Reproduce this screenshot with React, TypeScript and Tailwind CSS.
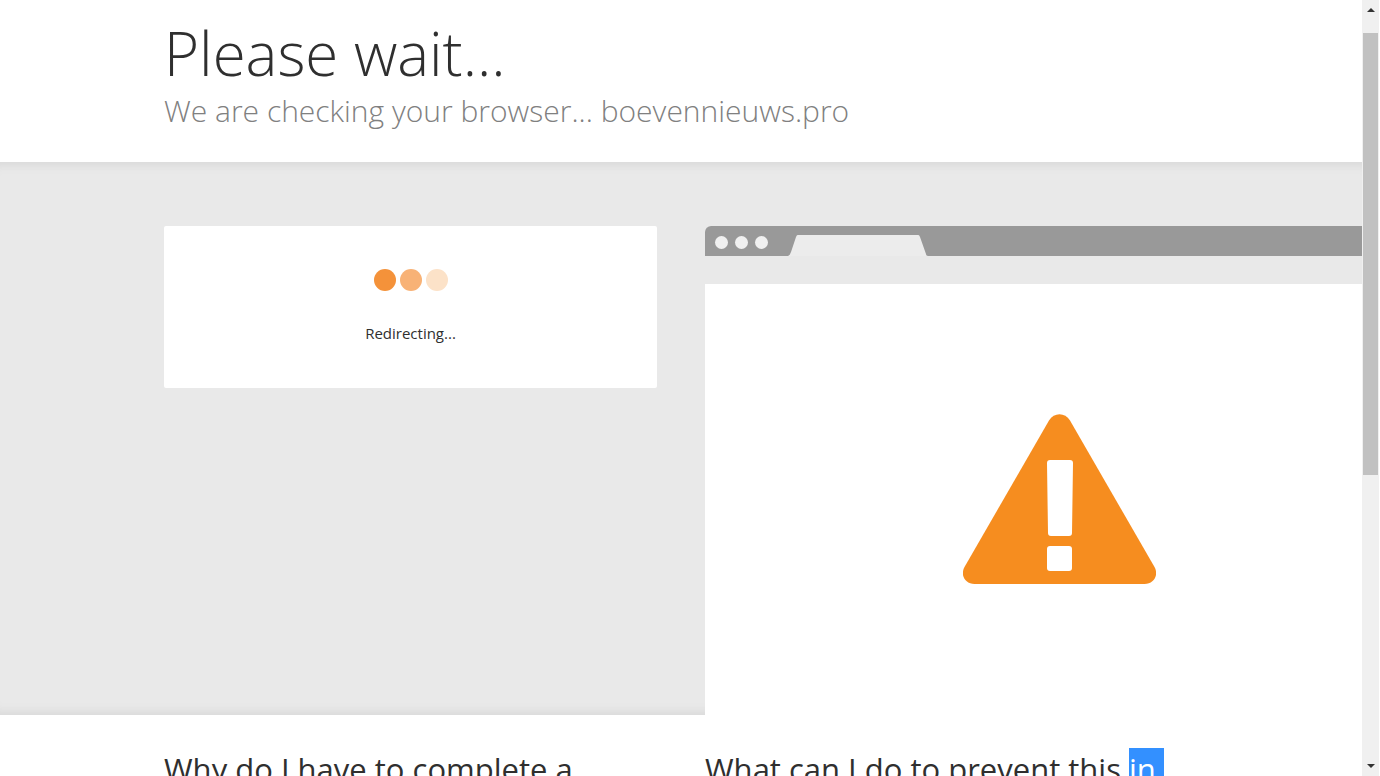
function ScrollTrack() {
  return (
    <div className="flex w-[18px] shrink-0 flex-col items-center border-r border-white bg-[#f0f0f0]">
      <button type="button" aria-label="Scroll up" className="flex h-[33px] w-full shrink-0 justify-center pt-2">
        <svg width="8" height="4" viewBox="0 0 8 4" fill="#333">
          <path d="M4 0l4 4H0z" />
        </svg>
      </button>
      <div className="h-[57%] w-[15px] bg-[#c1c1c1]" />
      <button type="button" aria-label="Scroll down" className="mt-auto flex h-5 w-full shrink-0 justify-center pt-2">
        <svg width="8" height="4" viewBox="0 0 8 4" fill="#333">
          <path d="M0 0h8L4 4z" />
        </svg>
      </button>
    </div>
  );
}

function BrowserPreview() {
  return (
    <div className="w-[144%] overflow-hidden rounded-t-md bg-white">
      <div className="flex h-[30px] items-end bg-[#999]">
        <div className="flex gap-[7px] self-center pt-[2px] pl-[10px]">
          <span className="size-[13px] rounded-full bg-[#f0f0f0]" />
          <span className="size-[13px] rounded-full bg-[#f0f0f0]" />
          <span className="size-[13px] rounded-full bg-[#f0f0f0]" />
        </div>
        <svg className="ml-5" width="140" height="22" viewBox="0 0 140 22" fill="#ececec">
          <path d="M0 22c2-1 2-2 3-4L8 3c1-2 1-2 3-2h118c2 0 2 0 3 2l6 17c0 1 1 2 2 2z" />
        </svg>
      </div>
      <div className="h-7 bg-[#e9e9e9]" />
      <div className="flex h-[431px] justify-center pt-[130px]">
        <svg width="193" height="170" viewBox="0 0 193 170" role="img" aria-label="Warning">
          <path
            d="M86 6.500C91-2 102-2 107 6.500L191.500 153C196 161 191 170 181.500 170H11.500C2 170-3 161 1.500 153z"
            fill="#f68d1f"
          />
          <path
            d="M87 46h20c2 0 3 1 3 3l-1 70c0 2-1 3-3 3H88c-2 0-3-1-3-3l-1-70c0-2 1-3 3-3z"
            fill="#fff"
          />
          <rect x="84" y="132" width="25" height="25" rx="3" fill="#fff" />
        </svg>
      </div>
    </div>
  );
}

export default function App() {
  return (
    <div className="flex h-screen overflow-hidden bg-white font-['Open_Sans','Noto_Sans',sans-serif] text-[#2f2f2f]">
      <main className="min-w-0 flex-1 overflow-hidden">
        <header className="mx-auto w-full max-w-[1034px] pt-5 pb-[26px]">
          <h1 className="text-[60px] leading-[66px] font-light">Please wait...</h1>
          <h2 className="text-[30px] leading-[50px] font-light text-[#808080]">
            We are checking your browser... boevennieuws.pro
          </h2>
        </header>

        <section className="bg-[#e9e9e9] pt-16 shadow-[inset_0_12px_8px_-8px_#dadada,inset_0_-12px_8px_-8px_#dadada]">
          <div className="mx-auto grid w-full max-w-[1034px] grid-cols-2 items-start gap-12">
            <div className="flex h-[162px] flex-col items-center rounded-xs bg-white pt-[43px]">
              <div className="flex gap-1">
                <span className="size-[22px] rounded-full bg-[#f4923a]" />
                <span className="size-[22px] rounded-full bg-[#f8b276]" />
                <span className="size-[22px] rounded-full bg-[#fce2c8]" />
              </div>
              <p className="mt-[30px] text-[15px] leading-6">Redirecting...</p>
            </div>
            <BrowserPreview />
          </div>
        </section>

        <section className="mx-auto grid w-full max-w-[1034px] grid-cols-2 gap-12 pt-8">
          <h2 className="text-[31px] leading-[44px]">Why do I have to complete a</h2>
          <h2 className="text-[31px] leading-[44px] whitespace-pre">
            What can I do to prevent this <span className="bg-[#3390ff] text-white">{"in "}</span>
          </h2>
        </section>
      </main>
      <ScrollTrack />
    </div>
  );
}
